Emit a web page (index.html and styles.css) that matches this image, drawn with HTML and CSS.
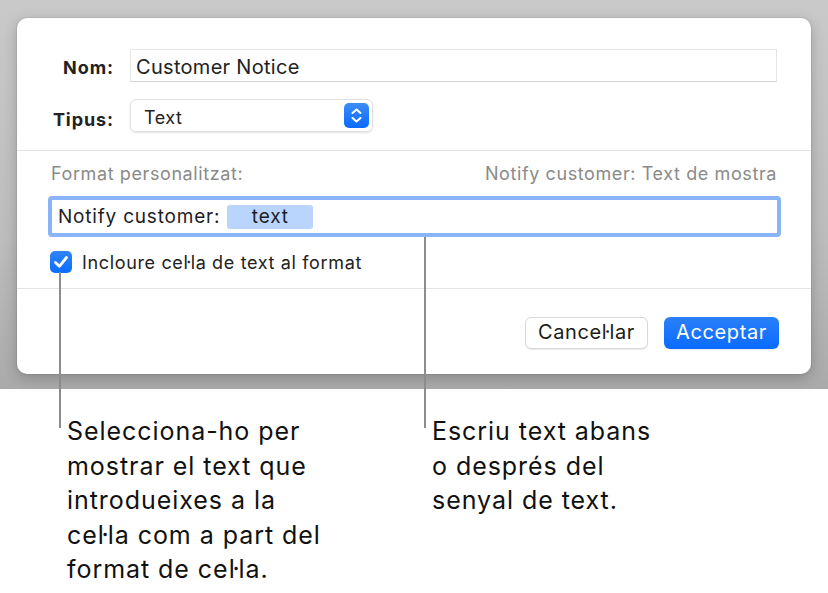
FILE: index.html
```html
<!DOCTYPE html>
<html lang="ca">
<head>
<meta charset="utf-8">
<title>Format personalitzat</title>
<link rel="stylesheet" href="styles.css">
</head>
<body>
<div class="page">
  <div class="backdrop">
    <div class="dialog">
      <div class="top">
        <div class="lbl lbl-nom">Nom:</div>
        <div class="field">Customer Notice</div>
        <div class="lbl lbl-tipus">Tipus:</div>
        <div class="popup-wrap">
          <div class="popup">
            <span class="popup-text">Text</span>
            <span class="stepper">
              <svg width="25" height="25" viewBox="0 0 25 25">
                <path d="M8.5 10 L12.5 6.5 L16.5 10" fill="none" stroke="#fff" stroke-width="2" stroke-linecap="round" stroke-linejoin="round"/>
                <path d="M8.5 15 L12.5 18.5 L16.5 15" fill="none" stroke="#fff" stroke-width="2" stroke-linecap="round" stroke-linejoin="round"/>
              </svg>
            </span>
          </div>
        </div>
      </div>
      <div class="mid">
        <div class="hdr">
          <span>Format personalitzat:</span>
          <span>Notify customer: Text de mostra</span>
        </div>
        <div class="fmt">
          <span>Notify customer:</span><span class="token">text</span>
        </div>
        <div class="check">
          <span class="box">
            <svg width="22" height="22" viewBox="0 0 22 22">
              <path d="M5.5 11.5 L9.3 15.3 L16.5 6.5" fill="none" stroke="#fff" stroke-width="2.8" stroke-linecap="round" stroke-linejoin="round"/>
            </svg>
          </span>
          <span class="check-label">Incloure cel·la de text al format</span>
        </div>
      </div>
      <div class="foot">
        <button class="btn">Cancel·lar</button>
        <button class="btn primary">Acceptar</button>
      </div>
    </div>
  </div>
  <div class="callouts">
    <p class="note">Selecciona-ho per<br>mostrar el text que<br>introdueixes a la<br>cel·la com a part del<br>format de cel·la.</p>
    <p class="note">Escriu text abans<br>o després del<br>senyal de text.</p>
  </div>
  <span class="leader leader-left"></span>
  <span class="leader leader-right"></span>
</div>
</body>
</html>
```

FILE: styles.css
```css
* { box-sizing: border-box; }
html, body { margin: 0; padding: 0; background: #fff; }
body {
  font-family: Inter, "Liberation Sans", sans-serif;
  color: #1d1d1f;
  width: 828px;
  height: 593px;
  overflow: hidden;
}
.page { position: relative; width: 828px; height: 593px; }

.backdrop {
  background: linear-gradient(to bottom, #c9c9c9 0%, #bdbdbd 60%, #aaaaaa 100%);
  padding: 18px 17px 15px 17px;
}
.dialog {
  background: #fff;
  border-radius: 10px;
  box-shadow: 0 4px 14px rgba(0,0,0,0.22), 0 0 0 1px rgba(0,0,0,0.06);
}

/* top section */
.top {
  display: grid;
  grid-template-columns: 62px 1fr;
  column-gap: 17px;
  row-gap: 17px;
  padding: 31px 34px 18px 34px;
  align-items: center;
}
.lbl {
  text-align: right;
  font-weight: 700;
  font-size: 18px;
  letter-spacing: 0.9px;
  margin-right: -0.9px;
  color: #222;
}
.lbl-nom { padding-top: 3px; }
.lbl-tipus { padding-top: 8px; }
.field {
  height: 33px;
  border: 1px solid #e6e6e6;
  border-bottom-color: #d6d6d6;
  padding: 2px 5px 0 5px;
  display: flex;
  align-items: center;
  font-size: 20px;
  letter-spacing: 0.3px;
  color: #222;
}
.popup-wrap { display: flex; }
.popup {
  width: 243px;
  height: 33px;
  border-radius: 6px;
  border: 1px solid #e0e0e0;
  box-shadow: 0 1px 2px rgba(0,0,0,0.12);
  display: flex;
  align-items: center;
  justify-content: space-between;
  padding: 0 3px 0 13px;
  font-size: 18px;
  letter-spacing: 0.5px;
  color: #222;
}
.popup-text { padding-top: 4px; }
.stepper {
  width: 25px;
  height: 25px;
  border-radius: 5px;
  background: linear-gradient(to bottom, #3d8cf8, #0a6bfe);
  display: flex;
}

/* middle section */
.mid {
  border-top: 1px solid #e4e4e4;
  padding: 12px 30px 15px 31px;
}
.hdr {
  display: flex;
  justify-content: space-between;
  font-size: 18px;
  line-height: 22px;
  letter-spacing: 0.6px;
  color: #8a8a8a;
  padding: 0 4px 0 3px;
}
.fmt {
  margin-top: 11px;
  height: 41px;
  border: 4px solid #8ab4f8;
  border-radius: 4px;
  display: flex;
  align-items: center;
  padding-left: 6px;
  font-size: 19px;
  letter-spacing: 0.8px;
  color: #1d1d1f;
}
.token {
  margin-left: 7px;
  width: 86px;
  height: 24px;
  border-radius: 3px;
  background: #b9d5fe;
  display: flex;
  align-items: center;
  justify-content: center;
}
.check {
  margin-top: 14px;
  display: flex;
  align-items: center;
  gap: 10px;
  padding-left: 2px;
  height: 22px;
}
.box {
  width: 22px;
  height: 22px;
  border-radius: 5px;
  background: linear-gradient(to bottom, #3184f8, #0b6cfd);
  display: flex;
}
.check-label { font-size: 18px; letter-spacing: 0.65px; color: #222; }

/* footer */
.foot {
  border-top: 1px solid #e4e4e4;
  padding: 28px 32px 25px 0;
  display: flex;
  justify-content: flex-end;
  gap: 16px;
}
.btn {
  height: 32px;
  border-radius: 6px;
  font-family: inherit;
  font-size: 20px;
  letter-spacing: 0.6px;
  padding: 0 0 3px 0;
  width: 123px;
  background: #fff;
  color: #1a1a1a;
  border: 1px solid #d8d8d8;
  box-shadow: 0 1px 1px rgba(0,0,0,0.08);
}
.btn.primary {
  width: 115px;
  color: #fff;
  border: none;
  background: linear-gradient(to bottom, #2a80fa, #0a6bfe);
}

/* callouts */
.callouts {
  display: grid;
  grid-template-columns: 365px auto;
  padding-left: 67px;
  margin-top: 25px;
}
.note {
  margin: 0;
  font-size: 25px;
  line-height: 34.5px;
  letter-spacing: 0.95px;
  color: #111;
}
.leader {
  position: absolute;
  width: 2px;
  background: #8c8c8c;
}
.leader-left { left: 59px; top: 272px; height: 156px; }
.leader-right { left: 424px; top: 237px; height: 191px; }
```
